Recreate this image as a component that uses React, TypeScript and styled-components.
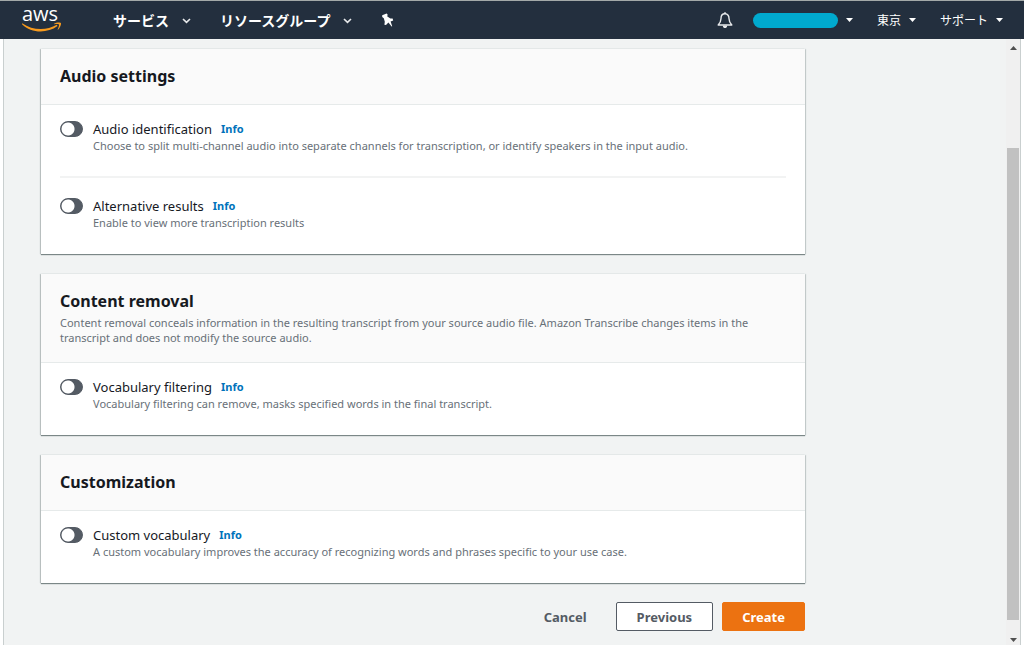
import React from 'react';
import styled, { createGlobalStyle } from 'styled-components';

const GlobalStyle = createGlobalStyle`
  * { box-sizing: border-box; }
  body {
    margin: 0;
    background: #fff;
    color: #16191f;
    font-family: "Noto Sans", "Noto Sans CJK JP", sans-serif;
  }
  h2, p { margin: 0; }
  button { font-family: inherit; cursor: pointer; }
`;

const Page = styled.div`
  display: flex;
  flex-direction: column;
  min-height: 100vh;
`;

const TopBar = styled.header`
  display: flex;
  justify-content: space-between;
  height: 39px;
  padding: 0 21px 0 22px;
  border-top: 1px solid #a3a9a8;
  background: #232f3e;
`;

const NavGroup = styled.nav<{ $gap: number }>`
  display: flex;
  align-items: center;
  gap: ${({ $gap }) => $gap}px;
`;

const LogoLink = styled.a`
  display: block;
  width: 40px;
  height: 38px;
  margin-right: 22px;
`;

const LogoDrawing = styled.svg`
  display: block;
  overflow: visible;
`;

const NavButton = styled.button<{ $strong?: boolean }>`
  display: flex;
  align-items: center;
  gap: ${({ $strong }) => ($strong ? 13 : 8)}px;
  padding: 0;
  border: 0;
  background: none;
  color: #fff;
  font-family: "Noto Sans CJK JP", sans-serif;
  font-size: ${({ $strong }) => ($strong ? 14 : 12)}px;
  font-weight: ${({ $strong }) => ($strong ? 700 : 400)};
  line-height: 20px;
  white-space: nowrap;
`;

const AccountName = styled.span`
  width: 85px;
  height: 15px;
  border-radius: 8px;
  background: #00a9ce;
`;

const Viewport = styled.div`
  display: flex;
  flex: 1;
  margin: 0 3px;
  border: 1px solid #c9cfcf;
  border-width: 0 1px;
  background: #f1f3f3;
`;

const Main = styled.main`
  flex: 1;
  min-width: 0;
  padding: 10px 37px 14px;
`;

const Form = styled.form`
  max-width: 764px;
`;

const Card = styled.section`
  background: #fff;
  box-shadow: 0 1px 1px #7b8787, 1px 0 1px #d0d6d6, -1px 0 1px #c4caca;

  & + & {
    margin-top: 20px;
  }
`;

const CardHeader = styled.div<{ $tall?: boolean }>`
  padding: ${({ $tall }) => ($tall ? '15px 19px 17px' : '15px 19px')};
  border-bottom: 1px solid #e6eaea;
  background: #fafafa;
`;

const CardTitle = styled.h2`
  font-size: 16px;
  font-weight: 700;
  line-height: 25px;
`;

const HelpText = styled.p`
  color: #687078;
  font-size: 11px;
  line-height: 15px;

  ${CardTitle} + & {
    margin-top: 1px;
  }
`;

const CardBody = styled.div`
  padding: 0 19px 1px;
`;

const SettingRow = styled.div`
  display: grid;
  grid-template-columns: 23px 1fr;
  column-gap: 10px;
  padding: 15px 0 23px;

  & + & {
    padding-top: 19px;
    border-top: 2px solid #f2f3f3;
  }
`;

const Switch = styled.input`
  appearance: none;
  width: 23px;
  height: 16px;
  margin: 1px 0 0;
  border: 1px solid #545b64;
  border-radius: 8px;
  background: radial-gradient(circle at 7px 50%, #fff 6px, #545b64 7px);
  cursor: pointer;

  &:checked {
    border-color: #0073bb;
    background: radial-gradient(circle at 14px 50%, #fff 6px, #0073bb 7px);
  }
`;

const SettingHeading = styled.div`
  display: flex;
  align-items: center;
  gap: 9px;
  height: 18px;
`;

const SettingLabel = styled.label`
  font-size: 13px;
  line-height: 18px;
`;

const InfoLink = styled.a`
  color: #0073bb;
  font-size: 11px;
  font-weight: 700;
  line-height: 18px;
  text-decoration: none;
`;

const Actions = styled.div`
  display: flex;
  justify-content: flex-end;
  gap: 9px;
  margin-top: 19px;
`;

const ActionButton = styled.button<{ $kind: 'link' | 'normal' | 'primary' }>`
  height: 29px;
  padding: 0 ${({ $kind }) => ($kind === 'normal' ? 20 : 19)}px;
  border: 1px solid
    ${({ $kind }) => ({ link: 'transparent', normal: '#545b64', primary: '#ec7211' })[$kind]};
  border-radius: 2px;
  background: ${({ $kind }) => ({ link: 'transparent', normal: '#fff', primary: '#ec7211' })[$kind]};
  color: ${({ $kind }) => ($kind === 'primary' ? '#fff' : '#545b64')};
  font-size: 13px;
  font-weight: 700;
  line-height: 18px;
`;

const ScrollTrack = styled.div`
  display: flex;
  flex-direction: column;
  align-items: center;
  width: 14px;
  padding: 7px 0 3px;
  background: #f0f0f0;
`;

const ScrollGap = styled.div<{ $share: number }>`
  flex: ${({ $share }) => $share} 0 0;
`;

const ScrollThumb = styled.div`
  flex: 470 0 0;
  width: 12px;
  background: #c1c1c1;
`;

const AwsLogo = () => (
  <LogoDrawing width="40" height="38" viewBox="0 0 40 38" role="img" aria-label="aws">
    <text x="0" y="20" fill="#fff" fontFamily="Open Sans, sans-serif" fontSize="20" fontWeight="400">
      aws
    </text>
    <path d="M0.2 22.2C10.5 29.6 24.5 29.8 34.8 23.8L35.5 25C25 32.7 9.5 32.4 0 23.2Z" fill="#f79a1e" />
    <path d="M32 22.8C34.4 21.2 38.2 21.2 38.9 22C39.5 23 38.1 27 36 28.8L35.6 28.4C36.6 26.5 37.4 24.2 36.9 23.5C36.3 22.8 34 23 32.1 23.3Z" fill="#f79a1e" />
  </LogoDrawing>
);

const Chevron = () => (
  <svg width="9" height="8" viewBox="0 0 9 8" aria-hidden="true">
    <path d="M1 3L4.5 6.4L8 3" fill="none" stroke="#e8eaec" strokeWidth="1.6" />
  </svg>
);

const Caret = ({ up = false, fill = '#fff' }: { up?: boolean; fill?: string }) => (
  <svg width="7" height="4" viewBox="0 0 7 4" aria-hidden="true">
    <path d={up ? 'M0 4H7L3.5 0Z' : 'M0 0H7L3.5 4Z'} fill={fill} />
  </svg>
);

const PinIcon = () => (
  <svg width="13" height="14" viewBox="0 0 13 14" aria-hidden="true">
    <path d="M1.2 2.2L5.6 0.6L6.6 1.6L6.3 3.4L9.4 5.4L11.6 5.6L12.2 7.4L9.6 8.6L11.2 13.2L10.6 13.4L7.4 9.6L5 12L3.4 11.8L3.8 8.8L2.8 5.2L1.2 4Z" fill="#fff" />
  </svg>
);

const BellIcon = () => (
  <svg width="16" height="17" viewBox="0 0 16 17" aria-hidden="true">
    <path d="M8 1.8C5.2 1.8 4 4 4 6.4C4 9.8 2.6 11.4 1.2 13H14.8C13.4 11.4 12 9.8 12 6.4C12 4 10.8 1.8 8 1.8Z" fill="none" stroke="#e8eaec" strokeWidth="1.4" strokeLinejoin="round" />
    <path d="M7.2 0.3H8.8V2H7.2ZM5.8 13.4H10.2C10.2 17 5.8 17 5.8 13.4Z" fill="#e8eaec" />
  </svg>
);

interface SettingProps {
  id: string;
  label: string;
  description: string;
}

const Setting = ({ id, label, description }: SettingProps) => (
  <SettingRow>
    <Switch type="checkbox" role="switch" id={id} aria-describedby={`${id}-help`} />
    <div>
      <SettingHeading>
        <SettingLabel htmlFor={id}>{label}</SettingLabel>
        <InfoLink href="#info">Info</InfoLink>
      </SettingHeading>
      <HelpText id={`${id}-help`}>{description}</HelpText>
    </div>
  </SettingRow>
);

export default function App() {
  return (
    <>
      <GlobalStyle />
      <Page>
        <TopBar>
          <NavGroup $gap={29}>
            <LogoLink href="#home">
              <AwsLogo />
            </LogoLink>
            <NavButton type="button" $strong>サービス<Chevron /></NavButton>
            <NavButton type="button" $strong>リソースグループ<Chevron /></NavButton>
            <NavButton type="button" aria-label="Pin"><PinIcon /></NavButton>
          </NavGroup>
          <NavGroup $gap={24}>
            <NavGroup as="div" $gap={20}>
              <NavButton type="button" aria-label="Notifications"><BellIcon /></NavButton>
              <NavButton type="button" aria-label="Account"><AccountName /><Caret /></NavButton>
            </NavGroup>
            <NavButton type="button">東京<Caret /></NavButton>
            <NavButton type="button">サポート<Caret /></NavButton>
          </NavGroup>
        </TopBar>
        <Viewport>
          <Main>
            <Form onSubmit={(event) => event.preventDefault()}>
              <Card>
                <CardHeader>
                  <CardTitle>Audio settings</CardTitle>
                </CardHeader>
                <CardBody>
                  <Setting
                    id="audio-identification"
                    label="Audio identification"
                    description="Choose to split multi-channel audio into separate channels for transcription, or identify speakers in the input audio."
                  />
                  <Setting
                    id="alternative-results"
                    label="Alternative results"
                    description="Enable to view more transcription results"
                  />
                </CardBody>
              </Card>
              <Card>
                <CardHeader $tall>
                  <CardTitle>Content removal</CardTitle>
                  <HelpText>
                    Content removal conceals information in the resulting transcript from your source audio file. Amazon
                    Transcribe changes items in the transcript and does not modify the source audio.
                  </HelpText>
                </CardHeader>
                <CardBody>
                  <Setting
                    id="vocabulary-filtering"
                    label="Vocabulary filtering"
                    description="Vocabulary filtering can remove, masks specified words in the final transcript."
                  />
                </CardBody>
              </Card>
              <Card>
                <CardHeader>
                  <CardTitle>Customization</CardTitle>
                </CardHeader>
                <CardBody>
                  <Setting
                    id="custom-vocabulary"
                    label="Custom vocabulary"
                    description="A custom vocabulary improves the accuracy of recognizing words and phrases specific to your use case."
                  />
                </CardBody>
              </Card>
              <Actions>
                <ActionButton type="button" $kind="link">Cancel</ActionButton>
                <ActionButton type="button" $kind="normal">Previous</ActionButton>
                <ActionButton type="submit" $kind="primary">Create</ActionButton>
              </Actions>
            </Form>
          </Main>
          <ScrollTrack aria-hidden="true">
            <Caret up fill="#505050" />
            <ScrollGap $share={98} />
            <ScrollThumb />
            <ScrollGap $share={18} />
            <Caret fill="#505050" />
          </ScrollTrack>
        </Viewport>
      </Page>
    </>
  );
}
